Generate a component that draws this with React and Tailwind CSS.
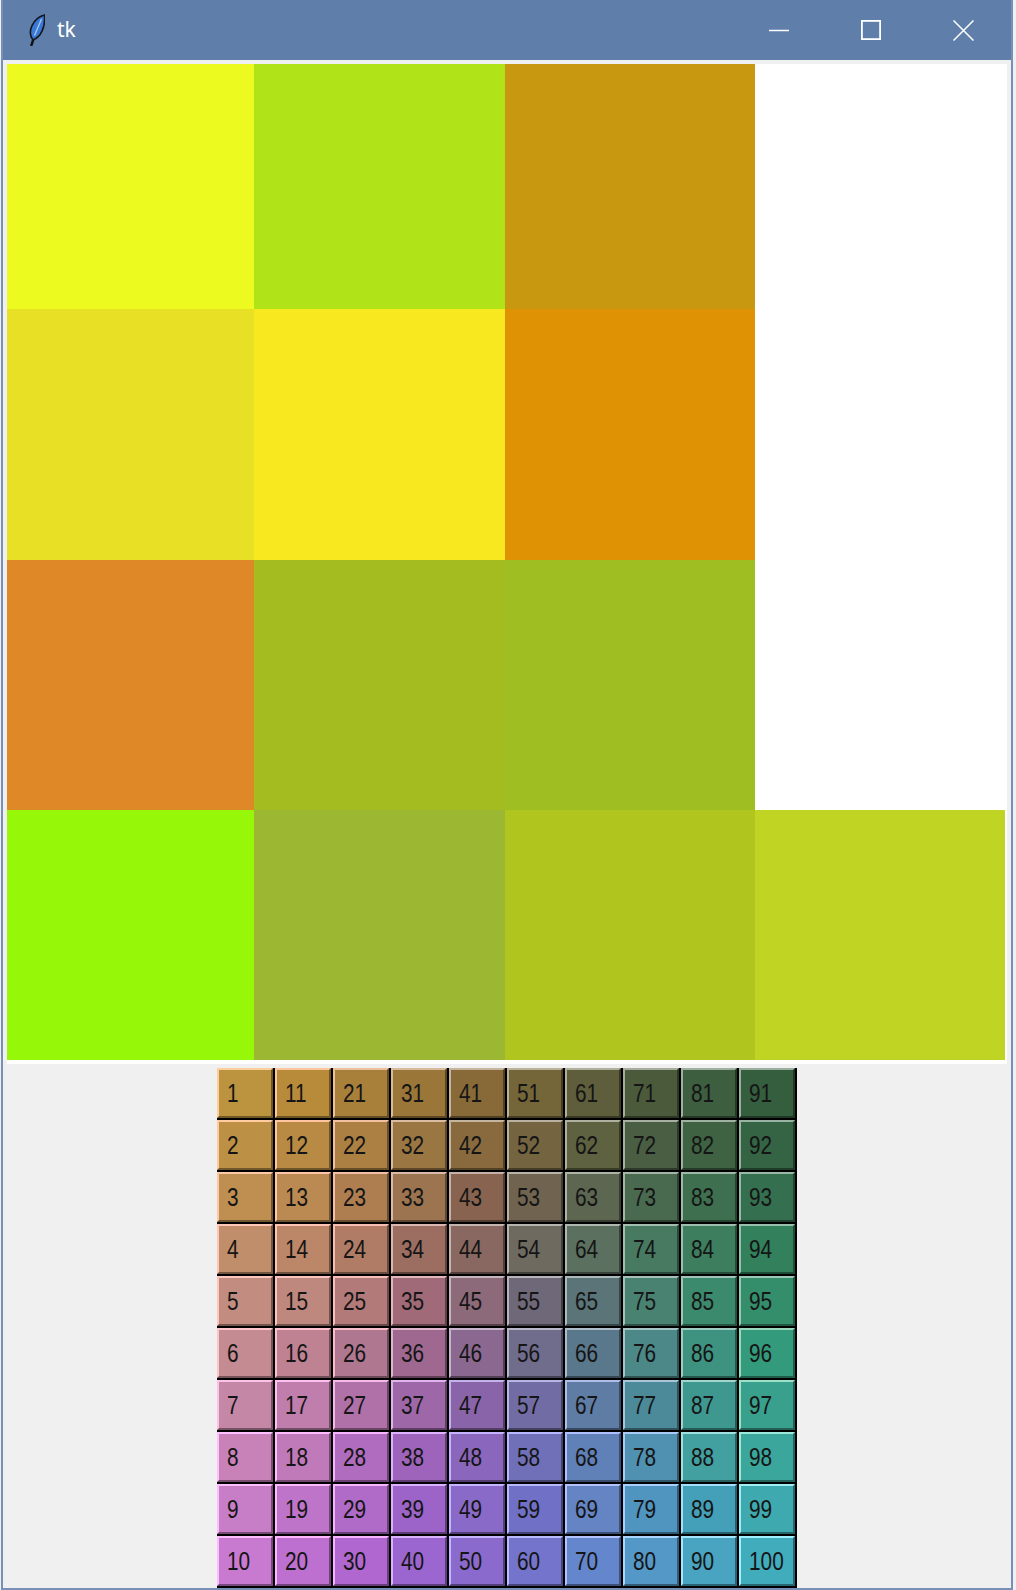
import React from 'react';

// canvas cells, row by row (null = left blank)
const CELLS = [
  ['bg-[#ecfa20]', 'bg-[#b0e418]', 'bg-[#c89810]', null],
  ['bg-[#e8e024]', 'bg-[#f8e820]', 'bg-[#de9204]', null],
  ['bg-[#de8828]', 'bg-[#a4bc20]', 'bg-[#9ebe22]', null],
  ['bg-[#96f808]', 'bg-[#9cb832]', 'bg-[#b0c61e]', 'bg-[#c0d424]'],
];

// button colours, one column (ten numbers) per line
const COLORS = [
  '#bc933e', '#bd9145', '#be8f50', '#c08e6a', '#c38c80', '#c48b92', '#c487a6', '#c882b8', '#c87ec6', '#c87ad0',
  '#b88b3a', '#b88a44', '#ba8a52', '#bb8768', '#bf887e', '#be8293', '#c07eac', '#c07aba', '#be74c8', '#be70d0',
  '#a8803a', '#ac8042', '#ae7e50', '#b07c66', '#b27a78', '#b07890', '#b070a8', '#b06cbe', '#b06ac8', '#b068d0',
  '#9a7638', '#9a7642', '#9c7450', '#9c6e62', '#a06a78', '#9e6890', '#9e68a8', '#9e64bc', '#9c64c8', '#9c66d0',
  '#886a38', '#886a3e', '#886450', '#886860', '#8c6a7a', '#8a6890', '#8a64a8', '#8a66bc', '#8a6ac8', '#8a6acc',
  '#746638', '#746440', '#706450', '#6e6a60', '#6e6878', '#706c8c', '#726ca4', '#7070b8', '#7070c6', '#7474cc',
  '#5e5e3c', '#5e6240', '#5c6650', '#5c7060', '#5a7478', '#5a788c', '#5e7ca4', '#6080b8', '#6484c4', '#6486cc',
  '#4c5a3c', '#4a5e44', '#4a6a50', '#487a62', '#4a8272', '#4c8888', '#4c8a9a', '#5090b0', '#5094c0', '#5498c8',
  '#3e5e40', '#3e6242', '#3e7050', '#3c7e5e', '#3c8a6e', '#3e9280', '#3e9890', '#42a0a0', '#44a0b8', '#48a4c0',
  '#345e3e', '#346444', '#347050', '#32805c', '#348e6c', '#349a7c', '#38a08c', '#3aa69c', '#3eaab0', '#40acbc',
];

// tk style 3d border colours
const shades = (hex) => {
  const c = [1, 3, 5].map((i) => parseInt(hex.slice(i, i + 2), 16));
  const light = c.map((v) => Math.round(Math.max(Math.min(v * 1.4, 255), (255 + v) / 2)));
  const dark = c.map((v) => Math.round(v * 0.6));
  return { light: `rgb(${light.join(',')})`, dark: `rgb(${dark.join(',')})` };
};

const Feather = () => (
  <svg width="18" height="32" viewBox="0 0 18 32">
    <path d="M4.5 31 L7.5 22" stroke="#111" strokeWidth="2.4" strokeLinecap="round" />
    <path d="M6 26 C-0.5 18 6 4 17.5 1 C18.5 13 14 23 6 26 Z" fill="#3a78d4" stroke="#16161c" strokeWidth="1.6" />
    <path d="M7.5 21.5 L14.5 5" stroke="#a4caf6" strokeWidth="1.3" />
  </svg>
);

const NumButton = ({ n, color }) => {
  const { light, dark } = shades(color);
  return (
    <div className="w-[58px] h-[52px] border-r-2 border-b-2 border-black">
      <div
        className="w-full h-full border-2 flex items-center pl-2 pb-[1px] text-[26px] leading-none text-[#151515] font-['Liberation_Sans',sans-serif] overflow-hidden"
        style={{ backgroundColor: color, borderTopColor: light, borderLeftColor: light, borderRightColor: dark, borderBottomColor: dark }}
      >
        <span className="inline-block origin-left scale-x-[0.8] whitespace-nowrap">{n}</span>
      </div>
    </div>
  );
};

export default function App() {
  return (
    <div className="w-[1016px] h-[1590px] bg-[#f0f0f0] overflow-hidden">
      <div className="ml-[1px] w-[1012px] h-[1590px] flex flex-col border-x-2 border-b-2 border-[#7890b8] bg-[#f0f0f0]">
        {/* title bar */}
        <div className="h-[60px] shrink-0 bg-[#5f7ea9] flex items-center">
          <div className="ml-[24px] flex items-center">
            <Feather />
          </div>
          <span className="ml-[12px] text-[21px] text-white font-['Noto_Sans','Open_Sans',sans-serif]">tk</span>
          <div className="ml-auto mr-[2px] flex h-full">
            <div className="w-[92px] h-full flex items-center justify-center">
              <svg width="20" height="20" viewBox="0 0 20 20">
                <path d="M0 10.5 H20" stroke="#fff" strokeWidth="1.5" />
              </svg>
            </div>
            <div className="w-[92px] h-full flex items-center justify-center">
              <svg width="20" height="20" viewBox="0 0 20 20">
                <rect x="0.9" y="0.9" width="18.2" height="18.2" fill="none" stroke="#fff" strokeWidth="1.8" />
              </svg>
            </div>
            <div className="w-[92px] h-full flex items-center justify-center">
              <svg width="21" height="21" viewBox="0 0 21 21">
                <path d="M0.5 0.5 L20.5 20.5 M20.5 0.5 L0.5 20.5" stroke="#fff" strokeWidth="1.5" />
              </svg>
            </div>
          </div>
        </div>

        {/* canvas */}
        <div className="mt-1 mx-auto w-[1000px] h-[1000px] bg-white shrink-0">
          <div className="grid grid-cols-[247px_251px_250px_250px] grid-rows-[245px_251px_250px_250px]">
            {CELLS.flat().map((cls, i) => (
              <div key={i} className={cls || ''} />
            ))}
          </div>
        </div>

        {/* number buttons */}
        <div className="mt-1 mx-auto grid grid-flow-col grid-rows-[repeat(10,52px)] grid-cols-[repeat(10,58px)]">
          {COLORS.map((c, i) => (
            <NumButton key={i} n={i + 1} color={c} />
          ))}
        </div>
      </div>
    </div>
  );
}
